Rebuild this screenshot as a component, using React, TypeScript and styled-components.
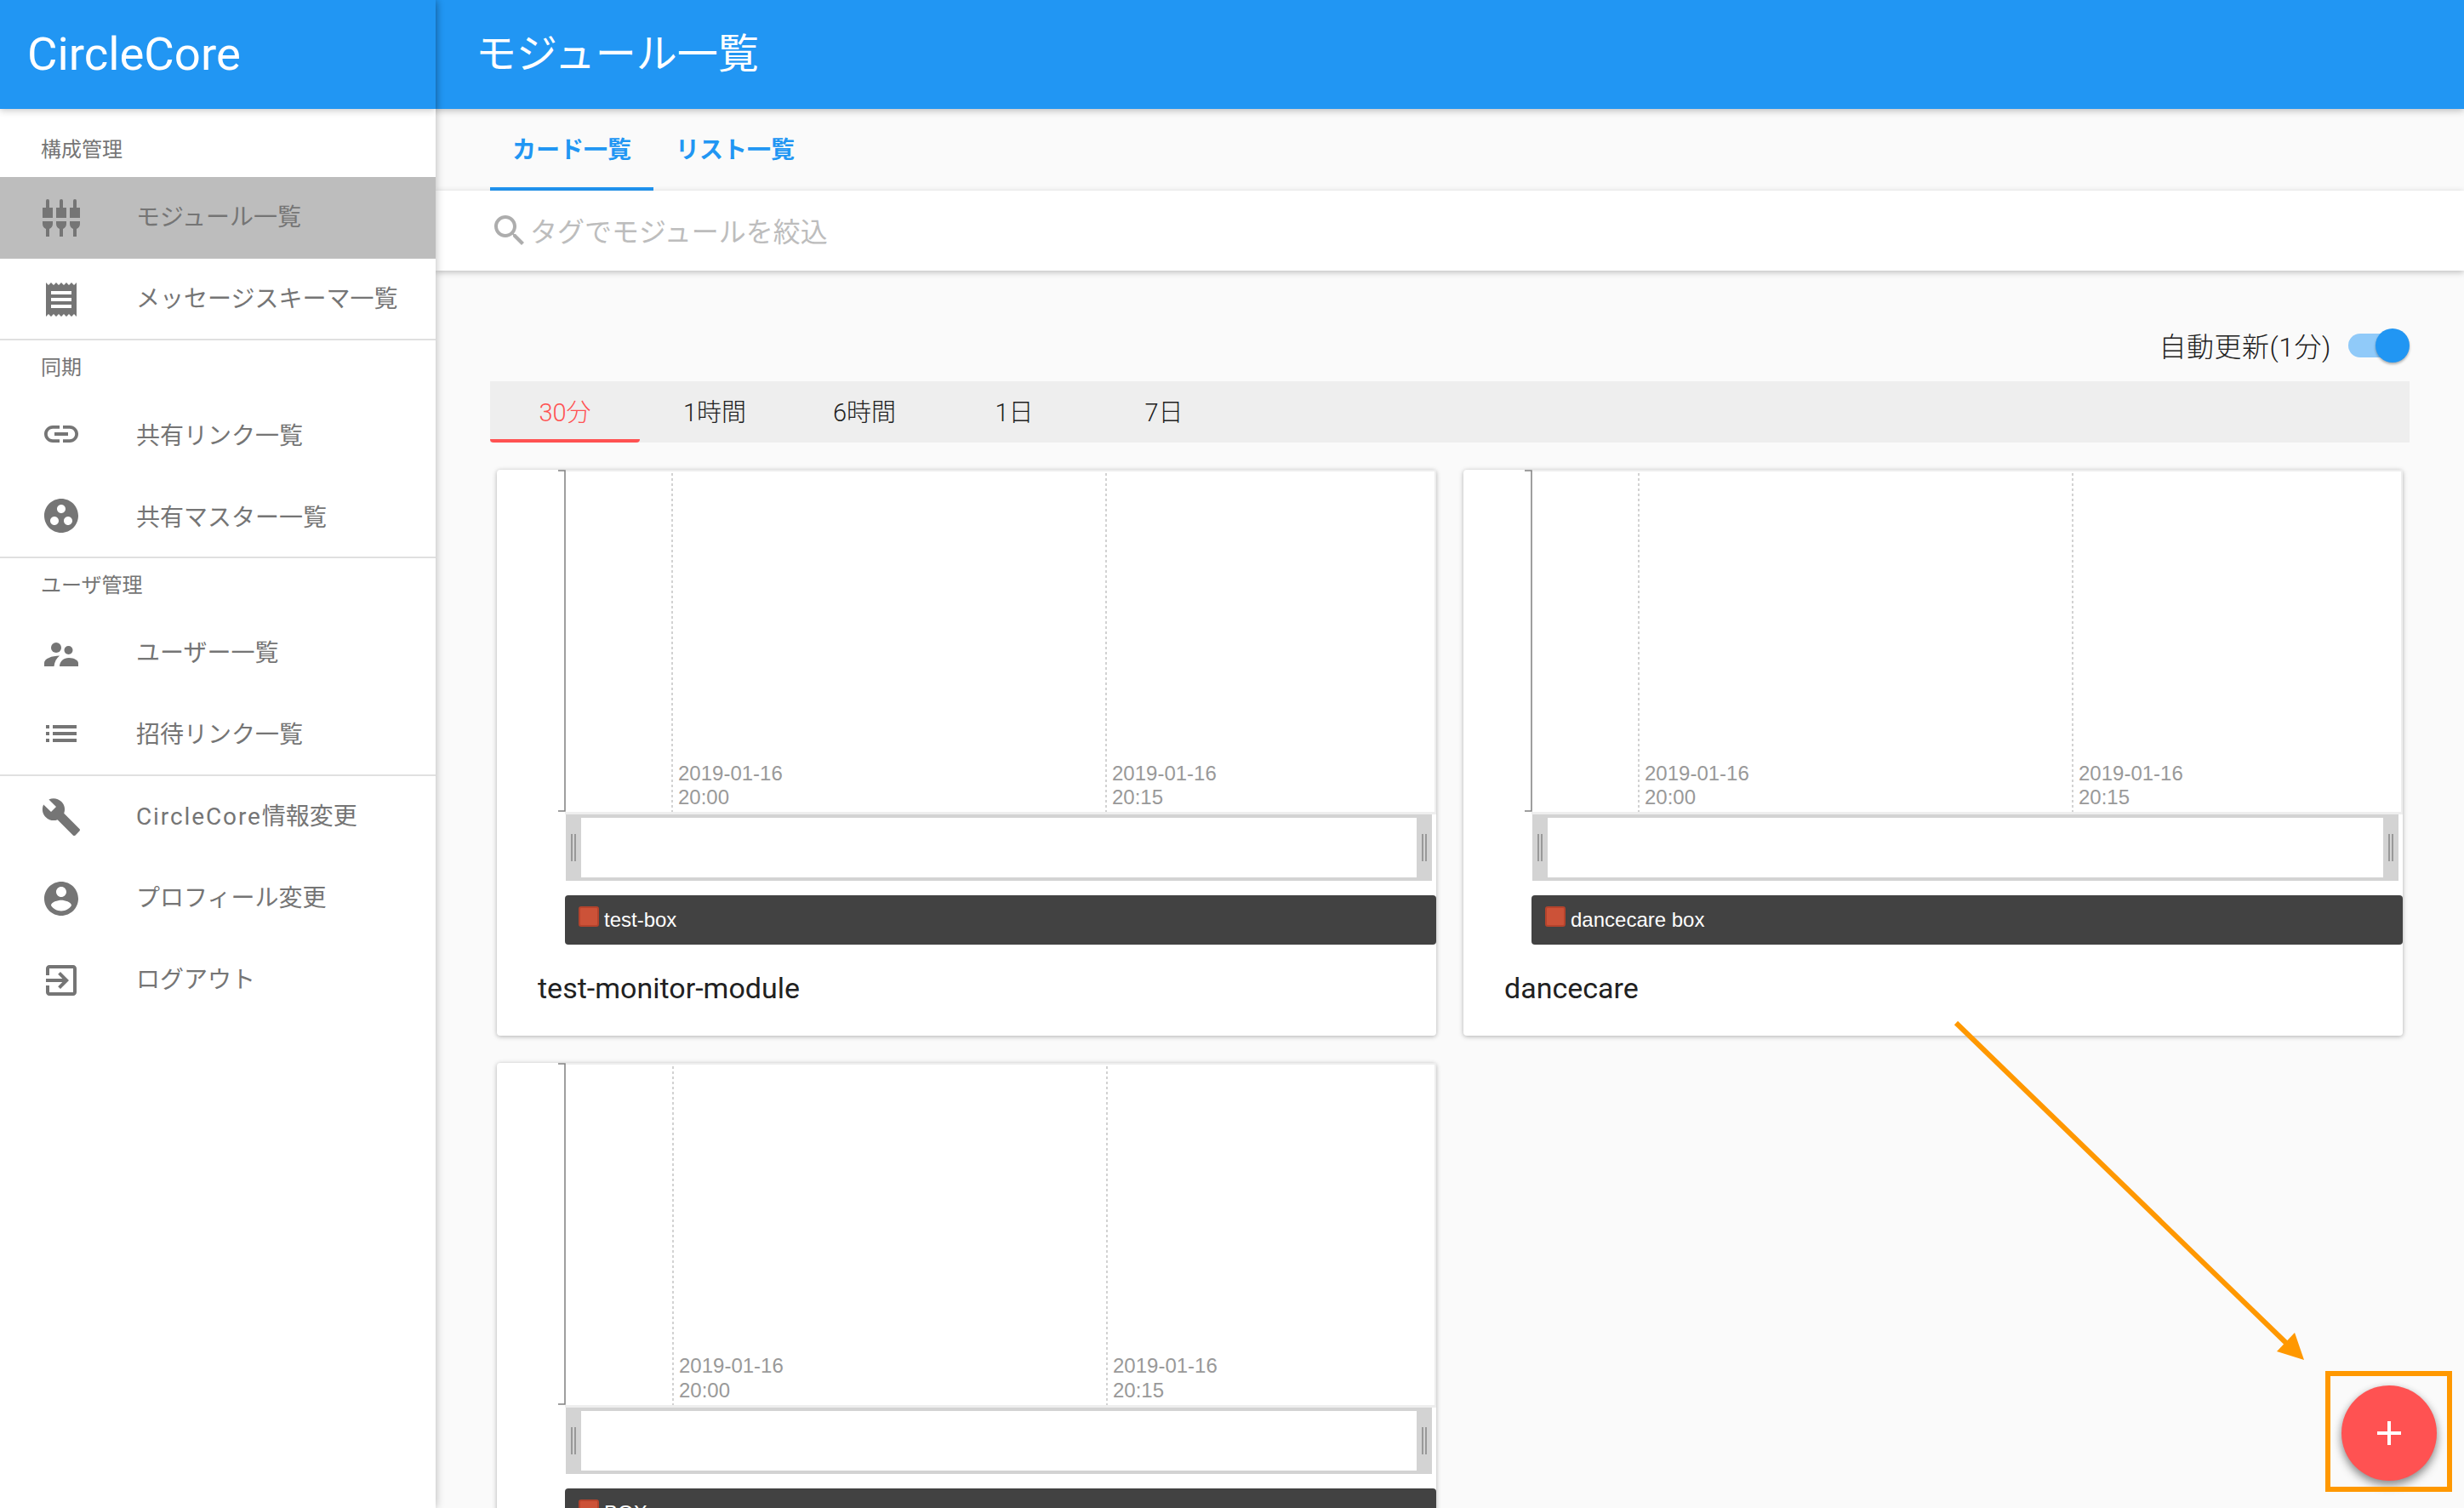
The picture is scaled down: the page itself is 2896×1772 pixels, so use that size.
import React from 'react';
import styled, { createGlobalStyle } from 'styled-components';

const Global = createGlobalStyle`
  html, body { margin: 0; padding: 0; background: #fafafa; }
  body { font-family: Roboto, "Noto Sans CJK JP", sans-serif; }
  * { box-sizing: border-box; }
`;

const Page = styled.div`
  position: relative;
  display: flex;
  width: 2896px;
  height: 1772px;
  overflow: hidden;
  background: #fafafa;
`;

const Sidebar = styled.aside`
  position: relative;
  z-index: 2;
  flex: 0 0 512px;
  display: flex;
  flex-direction: column;
  background: #fff;
  box-shadow: 0 0 10px rgba(0, 0, 0, 0.28);
`;

const Brand = styled.div`
  height: 128px;
  flex: none;
  display: flex;
  align-items: center;
  padding: 0 0 3px 32px;
  background: #2196f3;
  color: #fff;
  font-size: 54.5px;
  font-weight: 400;
  box-shadow: 0 2px 8px rgba(0, 0, 0, 0.22);
`;

const SectionLabel = styled.div<{ $first?: boolean }>`
  height: ${(p) => (p.$first ? '80px' : '62px')};
  padding: ${(p) => (p.$first ? '10px 0 0 48px' : '0 0 3px 48px')};
  display: flex;
  align-items: center;
  color: #757575;
  font-size: 24px;
  font-weight: 400;
`;

const NavRow = styled.div<{ $active?: boolean }>`
  height: 96px;
  flex: none;
  display: flex;
  align-items: center;
  padding-left: 48px;
  gap: 64px;
  background: ${(p) => (p.$active ? '#bdbdbd' : 'transparent')};
  color: #757575;
  font-size: 28px;
  font-weight: 400;
`;

const NavText = styled.span<{ $lift: number }>`
  padding-bottom: ${(p) => p.$lift}px;
`;

const Latin = styled.span`
  letter-spacing: 1.9px;
`;

const NavIcon = styled.svg`
  width: 48px;
  height: 48px;
  flex: none;
  fill: #757575;
  display: block;
`;

const Divider = styled.div<{ $overlap?: boolean }>`
  height: 2px;
  flex: none;
  margin-top: ${(p) => (p.$overlap ? '-2px' : '0')};
  background: #e0e0e0;
`;

const Main = styled.main`
  flex: 1;
  min-width: 0;
  display: flex;
  flex-direction: column;
`;

const AppBar = styled.header`
  height: 128px;
  flex: none;
  display: flex;
  align-items: center;
  padding: 0 0 10px 47px;
  background: #2196f3;
  color: #fff;
  font-size: 48px;
  font-weight: 400;
  box-shadow: 0 2px 8px rgba(0, 0, 0, 0.25);
  position: relative;
  z-index: 1;
`;

const ViewTabs = styled.nav`
  height: 96px;
  flex: none;
  display: flex;
  padding-left: 64px;
`;

const ViewTab = styled.div<{ $active?: boolean }>`
  width: 192px;
  display: flex;
  align-items: center;
  justify-content: center;
  color: #2196f3;
  font-size: 28px;
  font-weight: 700;
  border-bottom: 4px solid ${(p) => (p.$active ? '#2196f3' : 'transparent')};
`;

const SearchBar = styled.div`
  height: 94px;
  flex: none;
  display: flex;
  align-items: center;
  padding-left: 63px;
  gap: 0;
  background: #fff;
  color: #bdbdbd;
  font-size: 32px;
  font-weight: 400;
  box-shadow: 0 2px 7px rgba(0, 0, 0, 0.24);
`;

const SearchText = styled.span`
  padding-bottom: 3px;
`;

const SearchIcon = styled.svg`
  width: 48px;
  height: 48px;
  fill: #adadad;
  flex: none;
`;

const Content = styled.div`
  padding: 0 64px;
`;

const RefreshRow = styled.div`
  height: 130px;
  padding-top: 64px;
  display: flex;
  justify-content: flex-end;
  align-items: flex-start;
  gap: 20px;
`;

const RefreshLabel = styled.span`
  height: 48px;
  padding-bottom: 3px;
  display: flex;
  align-items: center;
  color: #212121;
  font-size: 32px;
  font-weight: 300;
  letter-spacing: 0.5px;
`;

const Toggle = styled.div`
  position: relative;
  width: 72px;
  height: 48px;
`;

const ToggleTrack = styled.div`
  position: absolute;
  left: 0;
  top: 10px;
  width: 68px;
  height: 28px;
  border-radius: 14px;
  background: #90caf9;
`;

const ToggleKnob = styled.div`
  position: absolute;
  right: 0;
  top: 4px;
  width: 40px;
  height: 40px;
  border-radius: 50%;
  background: #2196f3;
  box-shadow: 0 2px 3px rgba(0, 0, 0, 0.3);
`;

const RangeTabs = styled.div`
  height: 72px;
  display: flex;
  background: #eeeeee;
`;

const RangeTab = styled.div<{ $active?: boolean }>`
  width: 176px;
  display: flex;
  align-items: center;
  justify-content: center;
  color: ${(p) => (p.$active ? '#ff5252' : '#212121')};
  font-size: 29px;
  font-weight: 300;
  border-bottom: 4px solid ${(p) => (p.$active ? '#ff5252' : 'transparent')};
  border-radius: 0 0 4px 4px;
`;

const CardGrid = styled.div`
  display: grid;
  grid-template-columns: 1104px 1104px;
  gap: 32px;
  padding: 32px 8px 0;
`;

const Card = styled.article`
  height: 665px;
  background: #fff;
  border-radius: 4px;
  box-shadow: 0 1px 6px rgba(0, 0, 0, 0.2), 0 1px 4px rgba(0, 0, 0, 0.12);
  display: flex;
  flex-direction: column;
`;

const ChartSvg = styled.svg`
  display: block;
  width: 1104px;
  height: 500px;
  flex: none;
`;

const AxisLabel = styled.text`
  font-family: "Liberation Sans", sans-serif;
  font-size: 24px;
  fill: #999999;
`;

const Legend = styled.div`
  height: 58px;
  flex: none;
  margin-left: 80px;
  padding-left: 16px;
  display: flex;
  align-items: center;
  gap: 6px;
  background: #424242;
  border-radius: 4px;
  color: #fff;
  font-family: "Liberation Sans", sans-serif;
  font-size: 24px;
`;

const Swatch = styled.span`
  width: 24px;
  height: 24px;
  margin-top: -8px;
  border-radius: 3px;
  background: #cc5238;
  border: 2px solid #b5432c;
`;

const CardTitle = styled.div`
  height: 107px;
  display: flex;
  align-items: center;
  padding: 0 0 5px 48px;
  color: #212121;
  font-size: 34px;
  font-weight: 400;
`;

const Fab = styled.button`
  position: absolute;
  right: 32px;
  bottom: 32px;
  z-index: 3;
  width: 112px;
  height: 112px;
  padding: 0;
  border: 0;
  border-radius: 50%;
  background: #ff5252;
  display: flex;
  align-items: center;
  justify-content: center;
  box-shadow: 0 6px 12px rgba(0, 0, 0, 0.3), 0 3px 8px rgba(0, 0, 0, 0.22);
`;

const FabIcon = styled.svg`
  width: 48px;
  height: 48px;
  fill: #fff;
`;

const CalloutBox = styled.div`
  position: absolute;
  left: 2733px;
  top: 1611px;
  z-index: 4;
  width: 149px;
  height: 142px;
  border: 6px solid #ff9800;
`;

const CalloutArrow = styled.svg`
  position: absolute;
  left: 2290px;
  top: 1190px;
  z-index: 4;
  width: 430px;
  height: 420px;
`;

const ModuleGlyph = () => (
  <>
    {[0, 16, 32].map((x) => (
      <g key={x} transform={`translate(${x} 0)`}>
        <path d="M6 12V4a2 2 0 0 1 4 0v8h4v12H2V12z" />
        <path d="M2 28h12v3c0 3-1.6 5-4 6v9H6v-9c-2.4-1-4-3-4-6z" />
      </g>
    ))}
  </>
);

const PeopleGlyph = () => (
  <>
    <circle cx="18" cy="19" r="6" />
    <circle cx="32.5" cy="22" r="5" />
    <path d="M4 41v-4c0-5 9-8.5 18-8.5-3.5 3-6 7-6.5 12.5z" />
    <path d="M22 41c0-6 5-10 11-10 6 0 11 3 11 6v4z" />
  </>
);

const m = (d: string) => (
  <g transform="scale(2)">
    <path d={d} />
  </g>
);

const ICONS: Record<string, React.ReactNode> = {
  module: <ModuleGlyph />,
  receipt: m('M18 17H6v-2h12v2zm0-4H6v-2h12v2zm0-4H6V7h12v2zM3 22l1.5-1.5L6 22l1.5-1.5L9 22l1.5-1.5L12 22l1.5-1.5L15 22l1.5-1.5L18 22l1.5-1.5L21 22V2l-1.5 1.5L18 2l-1.5 1.5L15 2l-1.5 1.5L12 2l-1.5 1.5L9 2 7.5 3.5 6 2 4.5 3.5 3 2v20z'),
  link: m('M3.9 12c0-1.71 1.39-3.1 3.1-3.1h4V7H7c-2.76 0-5 2.24-5 5s2.24 5 5 5h4v-1.9H7c-1.71 0-3.1-1.39-3.1-3.1zM8 13h8v-2H8v2zm9-6h-4v1.9h4c1.71 0 3.1 1.39 3.1 3.1s-1.39 3.1-3.1 3.1h-4V17h4c2.76 0 5-2.24 5-5s-2.24-5-5-5z'),
  group: m('M12 2C6.48 2 2 6.48 2 12s4.48 10 10 10 10-4.48 10-10S17.52 2 12 2zM8 17.5c-1.38 0-2.5-1.12-2.5-2.5s1.12-2.5 2.5-2.5 2.5 1.12 2.5 2.5-1.12 2.5-2.5 2.5zM9.5 8c0-1.38 1.12-2.5 2.5-2.5s2.5 1.12 2.5 2.5-1.12 2.5-2.5 2.5S9.5 9.38 9.5 8zm6.5 9.5c-1.38 0-2.5-1.12-2.5-2.5s1.12-2.5 2.5-2.5 2.5 1.12 2.5 2.5-1.12 2.5-2.5 2.5z'),
  people: <PeopleGlyph />,
  list: m('M3 13h2v-2H3v2zm0 4h2v-2H3v2zm0-8h2V7H3v2zm4 4h14v-2H7v2zm0 4h14v-2H7v2zM7 7v2h14V7H7z'),
  build: m('M22.7 19l-9.1-9.1c.9-2.3.4-5-1.5-6.9-2-2-5-2.4-7.4-1.3L9 6 6 9 1.6 4.7C.4 7.1.9 10.1 2.9 12.1c1.9 1.9 4.6 2.4 6.9 1.5l9.1 9.1c.4.4 1 .4 1.4 0l2.3-2.3c.5-.4.5-1.1.1-1.4z'),
  account: m('M12 2C6.48 2 2 6.48 2 12s4.48 10 10 10 10-4.48 10-10S17.52 2 12 2zm0 3c1.66 0 3 1.34 3 3s-1.34 3-3 3-3-1.34-3-3 1.34-3 3-3zm0 14.2c-2.5 0-4.71-1.28-6-3.22.03-1.99 4-3.08 6-3.08 1.99 0 5.97 1.09 6 3.08-1.29 1.94-3.5 3.22-6 3.22z'),
  exit: m('M10.09 15.59L11.5 17l5-5-5-5-1.41 1.41L12.67 11H3v2h9.67l-2.58 2.59zM19 3H5c-1.11 0-2 .9-2 2v4h2V5h14v14H5v-4H3v4c0 1.1.89 2 2 2h14c1.1 0 2-.9 2-2V5c0-1.1-.9-2-2-2z'),
};

const Nav = ({ icon, children, active, lift = 0 }: { icon: string; children: React.ReactNode; active?: boolean; lift?: number }) => (
  <NavRow $active={active}>
    <NavIcon viewBox="0 0 48 48">{ICONS[icon]}</NavIcon>
    <NavText $lift={lift}>{children}</NavText>
  </NavRow>
);

const Chart = ({ grid, labelY }: { grid: [number, number]; labelY: number }) => (
  <ChartSvg viewBox="0 0 1104 500">
    <rect x="80" y="0" width="1024" height="2" fill="#eeeeee" />
    <rect x="1102" y="0" width="2" height="402" fill="#eeeeee" />
    <rect x="80" y="402" width="1024" height="3" fill="#eeeeee" />
    <path d="M72 1H80V401H72" fill="none" stroke="#808080" strokeWidth="1.5" />
    {grid.map((x, i) => (
      <g key={x}>
        <line x1={x} x2={x} y1="4" y2="402" stroke="#c4c4c4" strokeWidth="1.5" strokeDasharray="3 3" />
        <AxisLabel x={x + 7} y={labelY}>2019-01-16</AxisLabel>
        <AxisLabel x={x + 7} y="393">{i === 0 ? '20:00' : '20:15'}</AxisLabel>
      </g>
    ))}
    <rect x="81" y="405" width="1018" height="78" fill="#d3d3d3" />
    <rect x="99" y="409" width="982" height="70" fill="#ffffff" />
    {[87, 91, 1087, 1091].map((x) => (
      <rect key={x} x={x} y="428" width="2" height="32" fill="#999999" />
    ))}
  </ChartSvg>
);

const ModuleCard = ({ grid, labelY, legend, title }: { grid: [number, number]; labelY: number; legend: string; title: string }) => (
  <Card>
    <Chart grid={grid} labelY={labelY} />
    <Legend>
      <Swatch />
      <span>{legend}</span>
    </Legend>
    <CardTitle>{title}</CardTitle>
  </Card>
);

export default function App() {
  return (
    <Page>
      <Global />
      <Sidebar>
        <Brand>CircleCore</Brand>
        <SectionLabel $first>構成管理</SectionLabel>
        <Nav icon="module" active lift={6}>モジュール一覧</Nav>
        <Nav icon="receipt" lift={6}>メッセージスキーマ一覧</Nav>
        <Divider $overlap />
        <SectionLabel>同期</SectionLabel>
        <Nav icon="link">共有リンク一覧</Nav>
        <Nav icon="group">共有マスター一覧</Nav>
        <Divider />
        <SectionLabel>ユーザ管理</SectionLabel>
        <Nav icon="people" lift={3}>ユーザー一覧</Nav>
        <Nav icon="list" lift={3}>招待リンク一覧</Nav>
        <Divider />
        <Nav icon="build" lift={6}><Latin>CircleCore</Latin>情報変更</Nav>
        <Nav icon="account" lift={6}>プロフィール変更</Nav>
        <Nav icon="exit" lift={6}>ログアウト</Nav>
      </Sidebar>
      <Main>
        <AppBar>モジュール一覧</AppBar>
        <ViewTabs>
          <ViewTab $active>カード一覧</ViewTab>
          <ViewTab>リスト一覧</ViewTab>
        </ViewTabs>
        <SearchBar>
          <SearchIcon viewBox="0 0 24 24">
            <path d="M15.5 14h-.79l-.28-.27C15.41 12.59 16 11.11 16 9.5 16 5.91 13.09 3 9.5 3S3 5.91 3 9.5 5.91 16 9.5 16c1.61 0 3.09-.59 4.23-1.57l.27.28v.79l5 4.99L20.49 19l-4.99-5zm-6 0C7.01 14 5 11.99 5 9.5S7.01 5 9.5 5 14 7.01 14 9.5 11.99 14 9.5 14z" />
          </SearchIcon>
          <SearchText>タグでモジュールを絞込</SearchText>
        </SearchBar>
        <Content>
          <RefreshRow>
            <RefreshLabel>自動更新(1分)</RefreshLabel>
            <Toggle>
              <ToggleTrack />
              <ToggleKnob />
            </Toggle>
          </RefreshRow>
          <RangeTabs>
            <RangeTab $active>30分</RangeTab>
            <RangeTab>1時間</RangeTab>
            <RangeTab>6時間</RangeTab>
            <RangeTab>1日</RangeTab>
            <RangeTab>7日</RangeTab>
          </RangeTabs>
          <CardGrid>
            <ModuleCard grid={[206, 716]} labelY={365} legend="test-box" title="test-monitor-module" />
            <ModuleCard grid={[206, 716]} labelY={365} legend="dancecare box" title="dancecare" />
            <ModuleCard grid={[207, 717]} labelY={364} legend="BOX" title="" />
          </CardGrid>
        </Content>
      </Main>
      <Fab aria-label="追加">
        <FabIcon viewBox="0 0 24 24">
          <path d="M19 13h-6v6h-2v-6H5v-2h6V5h2v6h6v2z" />
        </FabIcon>
      </Fab>
      <CalloutBox />
      <CalloutArrow viewBox="2290 1190 430 420">
        <line x1="2299" y1="1202" x2="2690" y2="1581" stroke="#ff9800" strokeWidth="6" />
        <polygon points="2697,1566 2676,1588 2708,1598" fill="#ff9800" />
      </CalloutArrow>
    </Page>
  );
}
